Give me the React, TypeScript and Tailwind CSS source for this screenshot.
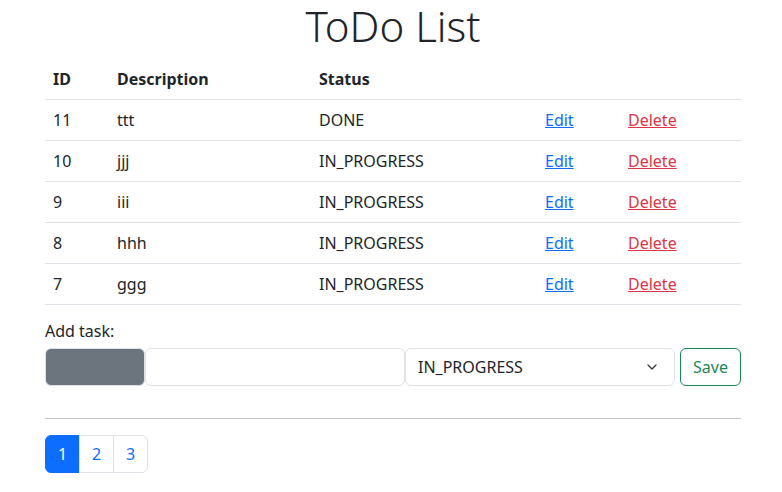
import { ChevronDown } from 'lucide-react'

const todos = [
  { id: 11, description: 'ttt', status: 'DONE' },
  { id: 10, description: 'jjj', status: 'IN_PROGRESS' },
  { id: 9, description: 'iii', status: 'IN_PROGRESS' },
  { id: 8, description: 'hhh', status: 'IN_PROGRESS' },
  { id: 7, description: 'ggg', status: 'IN_PROGRESS' },
]

export default function App() {
  return (
    <div className="min-h-screen bg-white font-['Noto_Sans',sans-serif] text-[16px] text-[#212529]">
      <div className="ml-[45px] w-[696px]">
        {/* 제목 */}
        <h1 className="mb-[7px] text-center text-[42px] font-light leading-[52px]">ToDo List</h1>

        {/* 할 일 목록 */}
        <table className="w-full border-collapse">
          <thead>
            <tr className="border-b border-[#dee2e6]">
              <th className="w-[64px] p-2 text-left font-bold leading-6">ID</th>
              <th className="w-[202px] p-2 text-left font-bold leading-6">Description</th>
              <th className="w-[226px] p-2 text-left font-bold leading-6">Status</th>
              <th className="w-[83px] p-2"></th>
              <th className="p-2"></th>
            </tr>
          </thead>
          <tbody>
            {todos.map((t) => (
              <tr key={t.id} className="border-b border-[#dee2e6]">
                <td className="p-2 leading-6">{t.id}</td>
                <td className="p-2 leading-6">{t.description}</td>
                <td className="p-2 leading-6">{t.status}</td>
                <td className="p-2 leading-6">
                  <a href="#" className="text-[#0d6efd] underline">Edit</a>
                </td>
                <td className="p-2 leading-6">
                  <a href="#" className="text-[#dc3545] underline">Delete</a>
                </td>
              </tr>
            ))}
          </tbody>
        </table>

        {/* 추가 폼 */}
        <div className="mt-[14px] mb-[5px] leading-6">Add task:</div>
        <div className="flex h-[38px] items-stretch">
          <div className="w-[100px] rounded-[6px] border border-[#dee2e6] bg-[#6c757d]"></div>
          <input className="w-[260px] rounded-[6px] border border-[#dee2e6] bg-white px-3 outline-none" />
          <div className="flex w-[270px] items-center justify-between rounded-[6px] border border-[#dee2e6] bg-white pl-3 pr-[14px]">
            <span>IN_PROGRESS</span>
            <ChevronDown size={16} strokeWidth={2} className="text-[#343a40]" />
          </div>
          <button className="ml-[5px] w-[61px] rounded-[6px] border border-[#198754] bg-white text-[#198754]">
            Save
          </button>
        </div>

        <hr className="mt-[32px] mb-[16px] border-t border-[#c4c4c4]" />

        {/* 페이지네이션 */}
        <div className="flex h-[38px] w-fit">
          <a href="#" className="flex w-[35px] items-center justify-center rounded-l-[6px] border border-[#0d6efd] bg-[#0d6efd] text-white">1</a>
          <a href="#" className="-ml-px flex w-[35px] items-center justify-center border border-[#dee2e6] text-[#0d6efd]">2</a>
          <a href="#" className="-ml-px flex w-[35px] items-center justify-center rounded-r-[6px] border border-[#dee2e6] text-[#0d6efd]">3</a>
        </div>
      </div>
    </div>
  )
}
